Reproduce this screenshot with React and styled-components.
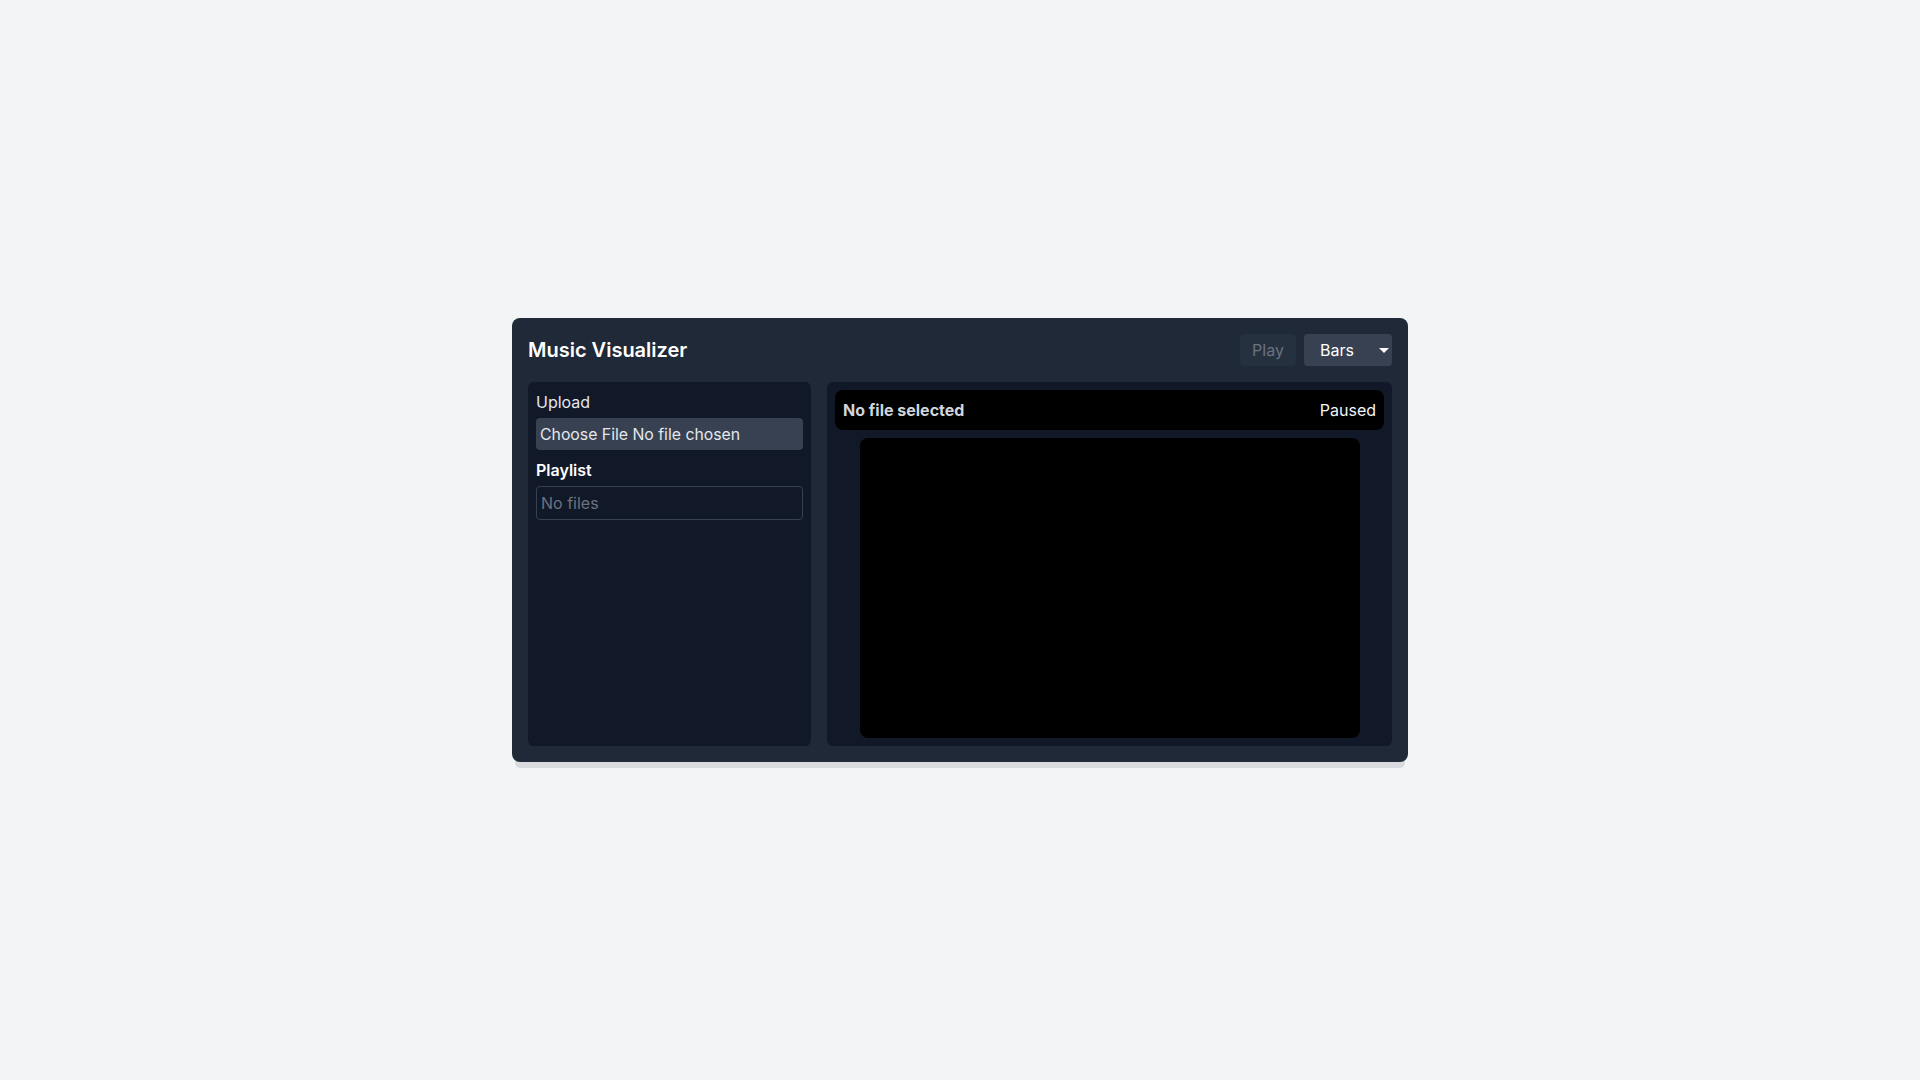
import React from 'react';
import styled, { createGlobalStyle } from 'styled-components';

const GlobalStyle = createGlobalStyle`
  html, body {
    margin: 0;
    padding: 0;
    background: #f3f4f6;
    font-family: Inter, 'Noto Sans', sans-serif;
  }
  #root {
    min-height: 100vh;
  }
`;

const Page = styled.div`
  min-height: 100vh;
  display: flex;
  align-items: center;
  justify-content: center;
`;

const Shell = styled.div`
  width: 896px;
  box-sizing: border-box;
  padding: 16px;
  background: #1f2937;
  border-radius: 8px;
  box-shadow: 0 9px 0 -3px #dadbde;
  color: #fff;
  display: flex;
  flex-direction: column;
  gap: 16px;
`;

const Header = styled.div`
  display: flex;
  justify-content: space-between;
  align-items: center;
  height: 32px;
  .title {
    margin: 0;
    font-size: 20px;
    font-weight: 600;
  }
  .controls {
    display: flex;
    gap: 8px;
  }
`;

const Button = styled.button`
  width: 56px;
  height: 32px;
  padding: 0;
  border: none;
  border-radius: 4px;
  font-family: inherit;
  font-size: 16px;
  background: ${(props) => (props.disabled ? '#263140' : '#374151')};
  color: ${(props) => (props.disabled ? '#6b7280' : '#fff')};
`;

const Select = styled.div`
  position: relative;
  width: 88px;
  height: 32px;
  box-sizing: border-box;
  padding-left: 16px;
  border-radius: 4px;
  background: #374151;
  font-size: 16px;
  display: flex;
  align-items: center;
  .caret {
    position: absolute;
    right: 3px;
    top: 14px;
    width: 0;
    height: 0;
    border-left: 5px solid transparent;
    border-right: 5px solid transparent;
    border-top: 5px solid #fff;
  }
`;

const Body = styled.div`
  display: flex;
  gap: 16px;
  height: 364px;
`;

const Sidebar = styled.div`
  width: 283px;
  box-sizing: border-box;
  padding: 8px;
  background: #111827;
  border-radius: 6px;
  display: flex;
  flex-direction: column;
`;

const Label = styled.div`
  font-size: 16px;
  line-height: 24px;
  font-weight: ${(props) => (props.bold ? 600 : 400)};
  color: ${(props) => (props.bold ? '#fff' : '#e5e7eb')};
  margin-bottom: 4px;
`;

const FileBox = styled.label`
  height: 32px;
  display: flex;
  align-items: center;
  padding: 0 4px;
  background: #374151;
  border-radius: 4px;
  font-size: 15.8px;
  color: #e5e7eb;
  margin-bottom: 8px;
`;

const Playlist = styled.div`
  height: 34px;
  box-sizing: border-box;
  display: flex;
  align-items: center;
  padding: 0 4px;
  border: 1px solid #374151;
  border-radius: 4px;
  font-size: 16px;
  color: #6b7280;
`;

const Stage = styled.div`
  flex: 1;
  box-sizing: border-box;
  padding: 8px;
  background: #111827;
  border-radius: 6px;
  display: flex;
  flex-direction: column;
  align-items: center;
  gap: 8px;
`;

const NowPlaying = styled.div`
  align-self: stretch;
  height: 40px;
  box-sizing: border-box;
  padding: 0 8px;
  background: #000;
  border-radius: 8px;
  display: flex;
  justify-content: space-between;
  align-items: center;
  font-size: 16px;
  .track {
    font-weight: 700;
    color: #d1d5db;
  }
  .state {
    color: #f3f4f6;
  }
`;

const Canvas = styled.div`
  width: 500px;
  height: 300px;
  background: #000;
  border-radius: 8px;
`;

const App = () => {
  return (
    <Page>
      <GlobalStyle />
      <Shell>
        <Header>
          <h1 className='title'>Music Visualizer</h1>
          <div className='controls'>
            <Button disabled>Play</Button>
            <Select>
              Bars
              <span className='caret' />
            </Select>
          </div>
        </Header>
        <Body>
          <Sidebar>
            <Label>Upload</Label>
            <FileBox>Choose File No file chosen</FileBox>
            <Label bold>Playlist</Label>
            <Playlist>No files</Playlist>
          </Sidebar>
          <Stage>
            <NowPlaying>
              <span className='track'>No file selected</span>
              <span className='state'>Paused</span>
            </NowPlaying>
            <Canvas />
          </Stage>
        </Body>
      </Shell>
    </Page>
  );
};
export default App;
